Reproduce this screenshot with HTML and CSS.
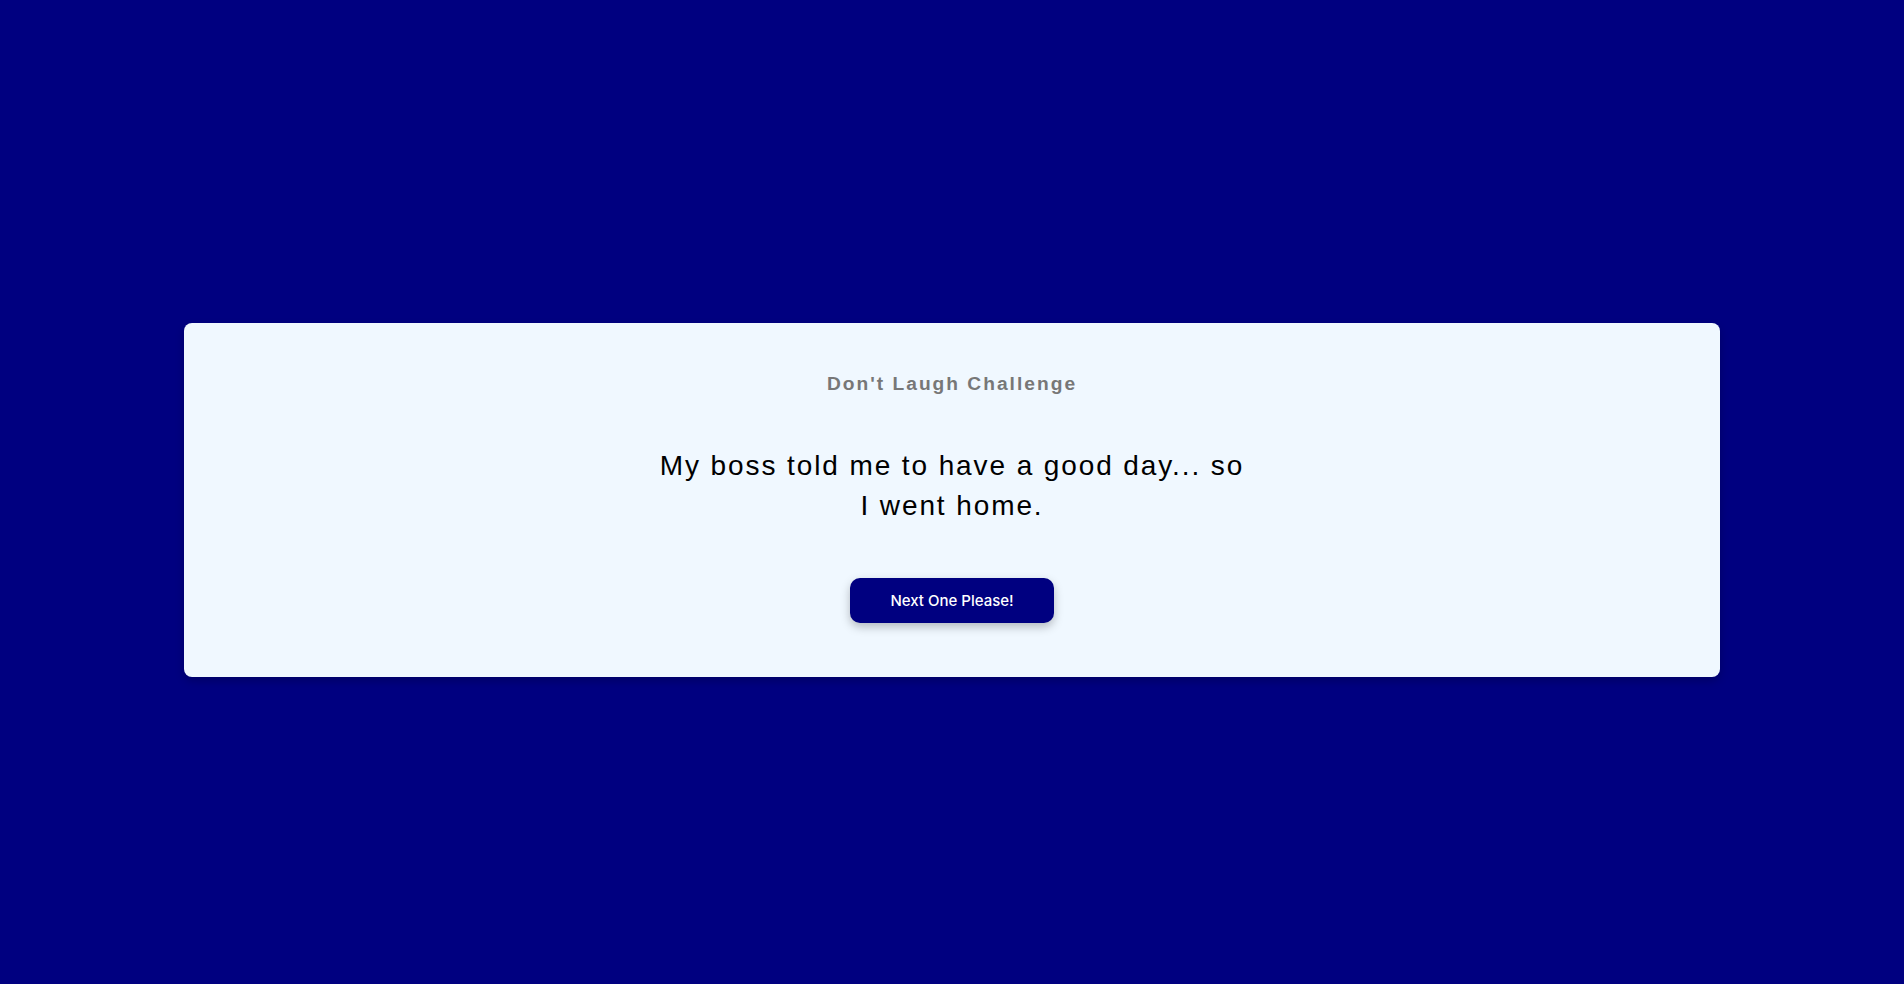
FILE: index.html
```html
<!DOCTYPE html>
<html lang="en">
<head>
<meta charset="utf-8">
<title>Don't Laugh Challenge</title>
<link rel="stylesheet" href="styles.css">
</head>
<body>
  <main class="card">
    <h3 class="title">Don't Laugh Challenge</h3>
    <p class="joke">My boss told me to have a good day... so I went home.</p>
    <button class="next-btn">Next One Please!</button>
  </main>
</body>
</html>
```

FILE: styles.css
```css
html, body {
  background: #000080;
}
body {
  margin: 8px;
  min-height: 100vh;
  display: flex;
  align-items: center;
  justify-content: center;
  font-family: "Liberation Sans", Arial, sans-serif;
}
.card {
  width: 1536px;
  box-sizing: border-box;
  background: #f0f8ff;
  border-radius: 8px;
  padding: 50px 20px 54px;
  display: flex;
  flex-direction: column;
  align-items: center;
  box-shadow: 0 4px 10px rgba(0, 0, 0, 0.2);
}
.title {
  margin: 0;
  font-size: 19.2px;
  font-weight: bold;
  letter-spacing: 2px;
  color: #777777;
  line-height: normal;
}
.joke {
  margin: 51px 0 0;
  max-width: 596px;
  font-size: 28px;
  line-height: 1.4;
  letter-spacing: 1.9px;
  color: #000;
  text-align: center;
}
.next-btn {
  margin-top: 53px;
  width: 204px;
  height: 45px;
  border: none;
  border-radius: 10px;
  background: #000080;
  color: #fff;
  font-family: Inter, "Liberation Sans", sans-serif;
  font-size: 15px;
  font-weight: 500;
  box-shadow: 0 4px 10px rgba(0, 0, 0, 0.25);
  cursor: pointer;
}
```
